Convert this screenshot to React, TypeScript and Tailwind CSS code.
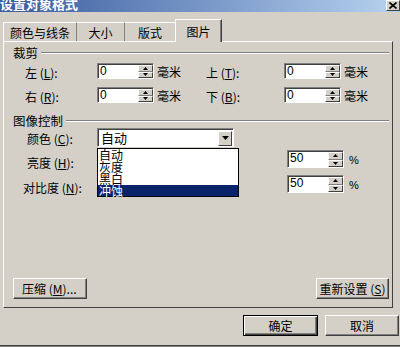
import React from 'react';

function Arrow({ dir }: { dir: 'up' | 'down' }) {
    return (
        <svg width="5" height="3" viewBox="0 0 5 3" className="block">
            {dir === 'up' ? <polygon points="2.5,0 5,3 0,3" fill="#000" /> : <polygon points="0,0 5,0 2.5,3" fill="#000" />}
        </svg>
    );
}

function SpinBox({ value, h = 'h-[16px]' }: { value: string; h?: string }) {
    return (
        <div className={`flex ${h} w-[57px] bg-white border border-t-[#808080] border-l-[#808080] border-r-white border-b-white shadow-[inset_1px_1px_0_#404040]`}>
            <div className="flex-1 pl-[2px] pt-[1px] text-[12px] leading-[13px] font-['Liberation_Sans',sans-serif]">{value}</div>
            <div className="flex w-[15px] flex-col pt-[1px]">
                <div className="flex flex-1 items-center justify-center bg-[#d4d0c8] border border-t-white border-l-white border-r-[#404040] border-b-[#808080]">
                    <Arrow dir="up" />
                </div>
                <div className="flex flex-1 items-center justify-center bg-[#d4d0c8] border border-t-white border-l-white border-r-[#404040] border-b-[#404040]">
                    <Arrow dir="down" />
                </div>
            </div>
        </div>
    );
}

function GroupHeader({ title }: { title: string }) {
    return (
        <div className="flex h-[12px] items-center pl-[9px] pr-[3px]">
            <span className="leading-[12px] text-[12.5px]">{title}</span>
            <div className="ml-[3px] h-[2px] flex-1 border-t border-t-[#808080] border-b border-b-white" />
        </div>
    );
}

export default function App() {
    return (
        <div className="flex h-[347px] w-[400px] flex-col overflow-hidden bg-[#d4d0c8] font-['Noto_Sans_CJK_SC',sans-serif] text-[12px] text-black">
            {/* title bar */}
            <div className="flex h-[12px] overflow-hidden bg-linear-to-r from-[#3b5b9e] to-[#b8d3ef]">
                <div className="-mt-[3px] flex-1 text-[13px] leading-[13px] font-bold text-white">设置对象格式</div>
                <div className="flex h-[11px] w-[14px] items-center justify-center bg-[#d4d0c8] border border-t-white border-l-white border-r-[#404040] border-b-[#404040]">
                    <svg width="8" height="7" viewBox="0 0 8 7">
                        <path d="M0.5 0.5 L7.5 6.5 M7.5 0.5 L0.5 6.5" stroke="#000" strokeWidth="1.6" />
                    </svg>
                </div>
            </div>

            {/* tabs */}
            <div className="flex h-[29px] items-end pl-[3px]">
                <div className="flex h-[19px] w-[74px] items-center justify-center border-t border-l border-t-white border-l-white border-r border-r-[#808080] pt-[1px]">颜色与线条</div>
                <div className="flex h-[19px] w-[48px] items-center justify-center border-t border-t-white border-r border-r-[#808080] pt-[1px]">大小</div>
                <div className="flex h-[19px] w-[50px] items-center justify-center border-t border-t-white pt-[1px]">版式</div>
                <div className="relative z-10 -mb-[1px] flex h-[23px] w-[47px] items-start justify-center bg-[#d4d0c8] border-t border-l border-t-white border-l-white border-r border-r-[#404040] pt-[3px] shadow-[inset_-1px_0_0_#808080]">图片</div>
            </div>

            {/* tab page */}
            <div className="ml-[3px] flex h-[267px] w-[390px] flex-col border border-t-white border-l-white border-r-[#404040] border-b-[#404040]">
                <div className="mt-[5px]">
                    <GroupHeader title="裁剪" />
                </div>

                <div className="mt-[4px] flex h-[16px] items-center">
                    <div className="w-[93px] pl-[21px] pt-[4px]">左 (<u>L</u>):</div>
                    <SpinBox value="0" />
                    <div className="w-[52px] pl-[3px] pt-[2px]">毫米</div>
                    <div className="w-[78px] pt-[4px]">上 (<u>T</u>):</div>
                    <SpinBox value="0" />
                    <div className="pl-[3px] pt-[2px]">毫米</div>
                </div>

                <div className="mt-[8px] flex h-[16px] items-center">
                    <div className="w-[93px] pl-[21px] pt-[4px]">右 (<u>R</u>):</div>
                    <SpinBox value="0" />
                    <div className="w-[52px] pl-[3px] pt-[2px]">毫米</div>
                    <div className="w-[78px] pt-[4px]">下 (<u>B</u>):</div>
                    <SpinBox value="0" />
                    <div className="pl-[3px] pt-[2px]">毫米</div>
                </div>

                <div className="mt-[12px]">
                    <GroupHeader title="图像控制" />
                </div>

                <div className="mt-[1px] flex h-[19px] items-center">
                    <div className="w-[93px] pl-[23px] pt-[3px]">颜色 (<u>C</u>):</div>
                    <div className="relative z-10">
                        <div className="flex h-[19px] w-[137px] items-center bg-white border border-t-[#808080] border-l-[#808080] border-r-white border-b-white shadow-[inset_1px_1px_0_#404040]">
                            <div className="flex-1 pl-[3px] pt-[1px] text-[13px] leading-[14px]">自动</div>
                            <div className="mr-[1px] mt-[1px] flex h-[15px] w-[14px] items-center justify-center bg-[#d4d0c8] border border-t-white border-l-white border-r-[#404040] border-b-[#404040]">
                                <svg width="7" height="4" viewBox="0 0 7 4" className="block">
                                    <polygon points="0,0 7,0 3.5,4" fill="#000" />
                                </svg>
                            </div>
                        </div>
                        <div className="absolute left-0 top-[20px] flex w-[142px] flex-col bg-white border border-black text-[12px] leading-[12px]">
                            <div className="h-[12px] pl-[1px]">自动</div>
                            <div className="h-[12px] pl-[1px]">灰度</div>
                            <div className="h-[12px] pl-[1px]">黑白</div>
                            <div className="h-[11px] bg-[#0a246a] pl-[1px] text-white">冲蚀</div>
                        </div>
                    </div>
                </div>

                <div className="mt-[3px] flex h-[18px] items-center">
                    <div className="w-[283px] pl-[23px] pt-[7px]">亮度 (<u>H</u>):</div>
                    <SpinBox value="50" h="h-[18px]" />
                    <div className="pl-[5px] pt-[2px] font-['Liberation_Sans',sans-serif] text-[11px]">%</div>
                </div>

                <div className="mt-[7px] flex h-[18px] items-center">
                    <div className="w-[283px] pl-[19px] pt-[7px]">对比度 (<u>N</u>):</div>
                    <SpinBox value="50" h="h-[18px]" />
                    <div className="pl-[5px] pt-[2px] font-['Liberation_Sans',sans-serif] text-[11px]">%</div>
                </div>

                <div className="mt-auto flex justify-between pb-[8px] pl-[9px] pr-[3px]">
                    <div className="flex h-[21px] w-[74px] items-center pl-[8px] border border-t-white border-l-white border-r-[#404040] border-b-[#404040] shadow-[inset_-1px_-1px_0_#808080]">
                        压缩 (<u>M</u>)...
                    </div>
                    <div className="flex h-[21px] w-[73px] items-center justify-center border border-t-white border-l-white border-r-[#404040] border-b-[#404040] shadow-[inset_-1px_-1px_0_#808080]">
                        重新设置 (<u>S</u>)
                    </div>
                </div>
            </div>

            {/* dialog buttons */}
            <div className="flex flex-1 items-start justify-end gap-[7px] pt-[7px] pr-[1px] border-b border-b-[#404040]">
                <div className="flex h-[21px] w-[75px] items-center justify-center border border-black shadow-[inset_1px_1px_0_#ffffff,inset_-1px_-1px_0_#404040,inset_-2px_-2px_0_#808080]">
                    确定
                </div>
                <div className="flex h-[21px] w-[74px] items-center justify-center border border-t-white border-l-white border-r-[#404040] border-b-[#404040] shadow-[inset_-1px_-1px_0_#808080]">
                    取消
                </div>
            </div>
            <div className="h-[1px] bg-[#808080]" />
        </div>
    );
}
